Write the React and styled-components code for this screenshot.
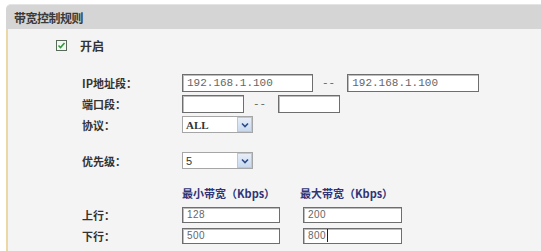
import React from 'react';
import styled, { createGlobalStyle } from 'styled-components';

const GlobalStyle = createGlobalStyle`
  html, body {
    margin: 0;
    padding: 0;
    background: #ffffff;
  }
  body {
    font-family: "Noto Sans CJK SC", "DejaVu Sans", sans-serif;
    color: #333;
  }
`;

const Panel = styled.div`
  margin: 4px 0 0 6px;
  width: 535px;
  height: 247px;
  display: flex;
  flex-direction: column;
`;

const TitleBar = styled.div`
  height: 24px;
  border-top: 1px solid #e4e4e4;
  border-top-left-radius: 5px;
  background: #d5d5d5;
  display: flex;
  align-items: center;
  padding-left: 8px;
  font-size: 12px;
  font-weight: bold;
  color: #3a3a3a;
  letter-spacing: -0.5px;
`;

const Body = styled.div`
  flex: 1;
  background: #f4f4f4;
  border-left: 2px solid #ead9a4;
  padding: 5px 0 0 48px;
`;

const CheckRow = styled.div`
  height: 22px;
  display: flex;
  align-items: center;
  gap: 13px;
  font-size: 12px;
  font-weight: bold;
  color: #333;
  margin-bottom: 16px;
`;

const Row = styled.div`
  height: ${p => p.h || 21}px;
  display: flex;
  align-items: center;
  margin-top: ${p => p.gap || 0}px;
`;

const Label = styled.div`
  width: 126px;
  padding-left: 26px;
  box-sizing: border-box;
  font-size: 11px;
  font-weight: bold;
  color: #333;
  flex-shrink: 0;
`;

const Controls = styled.div`
  display: flex;
  align-items: center;
`;

const Field = styled.div`
  box-sizing: border-box;
  width: ${p => p.w}px;
  height: ${p => p.ht || 18}px;
  background: #fff;
  border: 1px solid #6e6e6e;
  box-shadow: inset 1px 1px 0 #bdbdbd;
  display: flex;
  align-items: center;
  padding-left: 4px;
  font-family: ${p => (p.mono ? '"Liberation Mono", monospace' : '"Liberation Sans", Arial, sans-serif')};
  font-size: ${p => (p.mono ? 11 : 10)}px;
  color: #666;
  letter-spacing: ${p => (p.mono ? 0 : 0.5)}px;
  margin-right: ${p => p.mr || 0}px;
`;

const Caret = styled.span`
  display: inline-block;
  width: 1px;
  height: 13px;
  background: #222;
  margin-left: 1px;
`;

const Dash = styled.span`
  margin: 0 12px 0 9px;
  font-family: "Liberation Mono", monospace;
  font-size: 11px;
  color: #666;
`;

const Select = styled.div`
  box-sizing: border-box;
  width: 71px;
  height: 17px;
  background: #fff;
  border: 1px solid #a6a6a6;
  display: flex;
  align-items: center;
  justify-content: space-between;
  padding-left: 3px;
`;

const SelectText = styled.span`
  font-family: ${p => (p.serif ? '"Liberation Serif", serif' : '"Liberation Sans", Arial, sans-serif')};
  font-weight: ${p => (p.serif ? 'bold' : 'normal')};
  font-size: 11px;
  color: #333;
`;

const ArrowBox = styled.span`
  box-sizing: border-box;
  width: 15px;
  height: 15px;
  background: linear-gradient(#e7eef8, #c9d9ee);
  border: 1px solid #b7c8e0;
  display: flex;
  align-items: center;
  justify-content: center;
`;

const ColHead = styled.div`
  width: ${p => p.w}px;
  font-size: 11px;
  font-weight: bold;
  color: #2f3577;
`;

const Arrow = () => (
  <ArrowBox>
    <svg width="8" height="6" viewBox="0 0 8 6">
      <path d="M1 1.5 L4 4.5 L7 1.5" fill="none" stroke="#2d4a86" strokeWidth="1.6" />
    </svg>
  </ArrowBox>
);

const CheckBox = () => (
  <svg width="11" height="11" viewBox="0 0 11 11">
    <rect x="0.5" y="0.5" width="10" height="10" fill="#f4f8f4" stroke="#5a6a5a" />
    <path d="M2.5 5.5 L4.5 7.5 L8.5 3" fill="none" stroke="#2f9a3a" strokeWidth="1.6" />
  </svg>
);

export default function App() {
  return (
    <>
      <GlobalStyle />
      <Panel>
        <TitleBar>带宽控制规则</TitleBar>
        <Body>
          <CheckRow>
            <CheckBox />
            <span>开启</span>
          </CheckRow>
          <Row>
            <Label>IP地址段：</Label>
            <Controls>
              <Field w={131} mono>192.168.1.100</Field>
              <Dash>--</Dash>
              <Field w={132} mono>192.168.1.100</Field>
            </Controls>
          </Row>
          <Row>
            <Label>端口段：</Label>
            <Controls>
              <Field w={62} />
              <Dash>--</Dash>
              <Field w={62} />
            </Controls>
          </Row>
          <Row>
            <Label>协议：</Label>
            <Select>
              <SelectText serif>ALL</SelectText>
              <Arrow />
            </Select>
          </Row>
          <Row gap={15}>
            <Label>优先级：</Label>
            <Select>
              <SelectText>5</SelectText>
              <Arrow />
            </Select>
          </Row>
          <Row gap={12} h={20}>
            <Label />
            <ColHead w={118}>最小带宽（Kbps）</ColHead>
            <ColHead w={120}>最大带宽（Kbps）</ColHead>
          </Row>
          <Row gap={1}>
            <Label>上行：</Label>
            <Controls>
              <Field w={98} ht={16} mr={23}>128</Field>
              <Field w={99} ht={16}>200</Field>
            </Controls>
          </Row>
          <Row>
            <Label>下行：</Label>
            <Controls>
              <Field w={98} ht={16} mr={23}>500</Field>
              <Field w={99} ht={16}>800<Caret /></Field>
            </Controls>
          </Row>
        </Body>
      </Panel>
    </>
  );
}
